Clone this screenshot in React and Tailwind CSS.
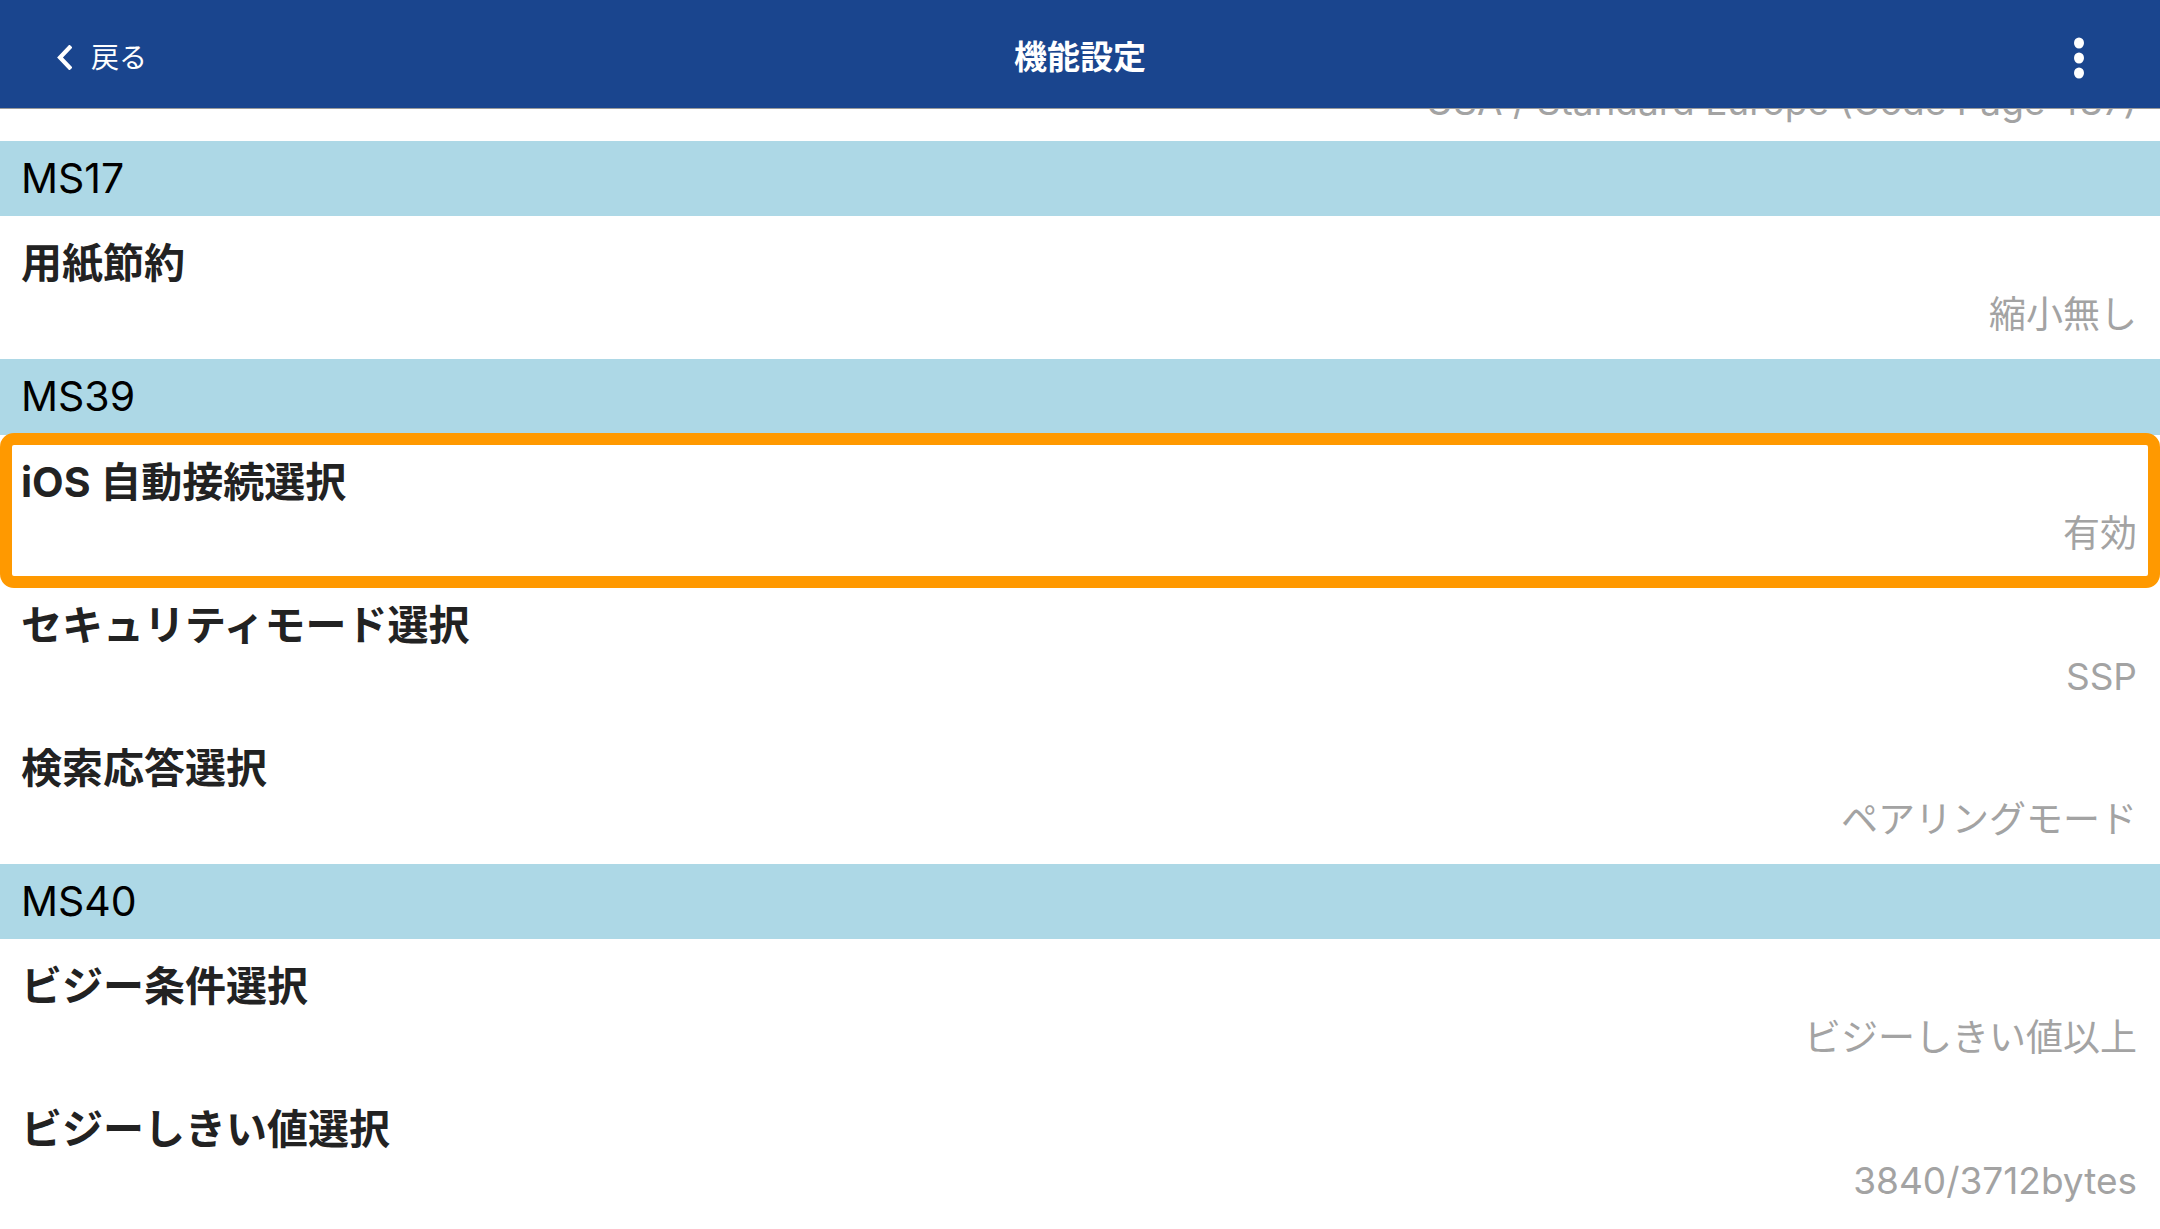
import React from "react";

function Header({ label }) {
  return (
    <div className="flex h-[75.5px] items-center bg-[#add8e6] pl-[21px]">
      <span className="text-[41px] leading-none text-black">{label}</span>
    </div>
  );
}

function Item({ title, value, highlight, bottomPad = "pb-[26px]" }) {
  return (
    <div className={`relative flex h-[143px] flex-col justify-between bg-white pl-[21px] pr-[23px] pt-[27px] ${bottomPad}`}>
      <div className="text-[41px] font-bold leading-none text-[#222222]">{title}</div>
      <div className="text-right text-[37px] leading-none text-[#a3a3a3]">{value}</div>
      {highlight && (
        <div className="pointer-events-none absolute -top-[1.5px] left-0 right-0 z-[5] h-[155px] rounded-[14px] border-[12px] border-[#ff9900]" />
      )}
    </div>
  );
}

export default function App() {
  return (
    <div className="relative h-[1229px] w-[2160px] overflow-hidden bg-white font-['Inter','Noto_Sans_CJK_JP',sans-serif]">
      <header className="absolute inset-x-0 top-0 z-10 grid h-[109px] grid-cols-3 items-center border-b border-[#9a9a9a] bg-[#1a458e] pt-[7px] text-white">
        <div className="flex items-center pl-[57px]">
          <svg width="15" height="25" viewBox="0 0 15 25" fill="none">
            <path d="M12.5 2.5 L3 12.5 L12.5 22.5" stroke="white" strokeWidth="4.2" strokeLinecap="square" strokeLinejoin="miter" />
          </svg>
          <span className="ml-[19px] text-[28px] leading-none">戻る</span>
        </div>
        <div className="text-center text-[33px] font-bold leading-none">機能設定</div>
        <div className="flex justify-end pr-[75px]">
          <svg width="12" height="42" viewBox="0 0 12 42" fill="white">
            <ellipse cx="6" cy="6" rx="5" ry="5.5" />
            <ellipse cx="6" cy="21" rx="5" ry="5.5" />
            <ellipse cx="6" cy="36" rx="5" ry="5.5" />
          </svg>
        </div>
      </header>

      <div className="-mt-[2.5px]">
        <Item title="" value="USA / Standard Europe (Code Page 437)" bottomPad="pb-[21px]" />
        <Header label="MS17" />
        <Item title="用紙節約" value="縮小無し" />
        <Header label="MS39" />
        <Item title="iOS 自動接続選択" value="有効" highlight />
        <Item title="セキュリティモード選択" value="SSP" />
        <Item title="検索応答選択" value="ペアリングモード" />
        <Header label="MS40" />
        <Item title="ビジー条件選択" value="ビジーしきい値以上" />
        <Item title="ビジーしきい値選択" value="3840/3712bytes" />
      </div>
    </div>
  );
}
